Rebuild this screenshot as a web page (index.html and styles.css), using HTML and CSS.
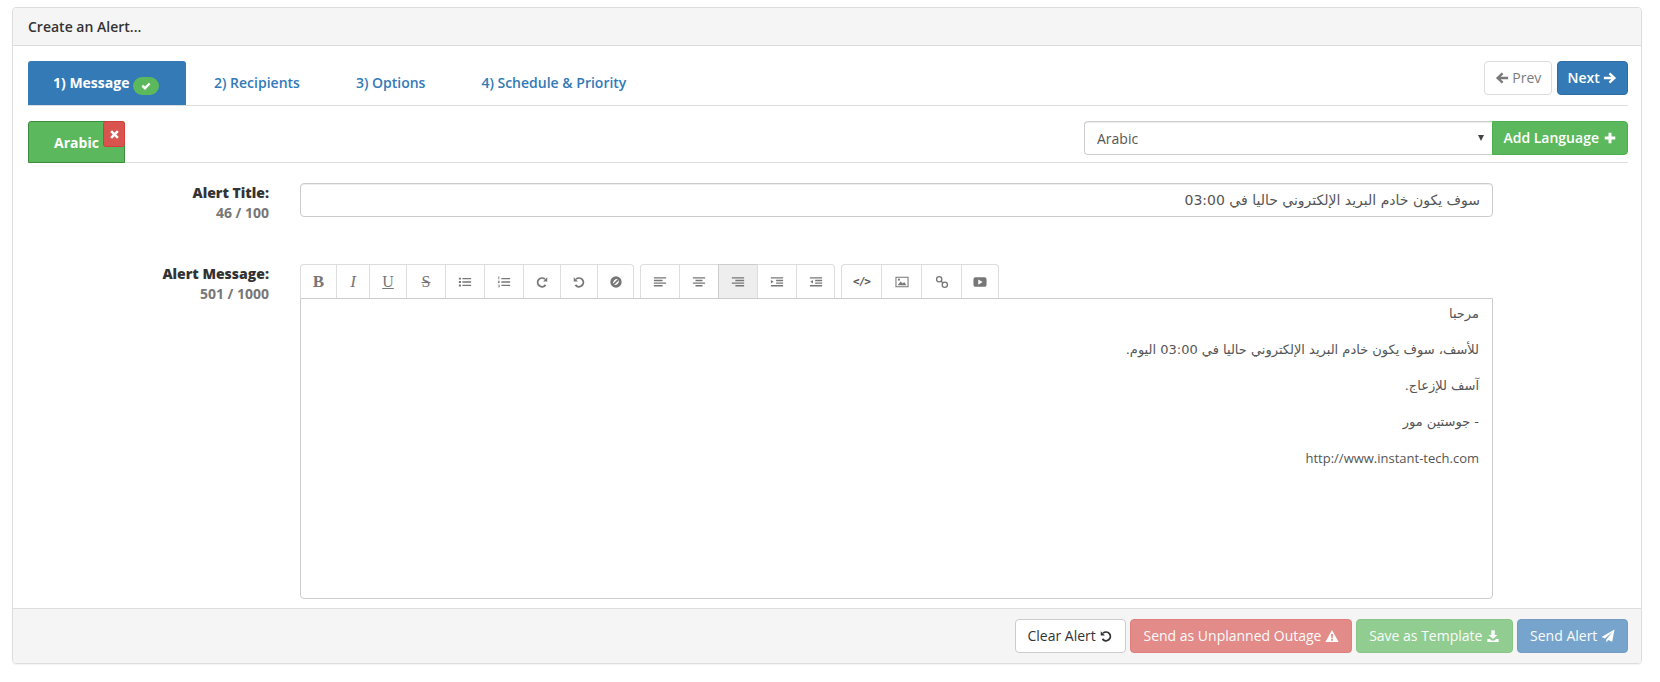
FILE: index.html
```html
<!DOCTYPE html>
<html lang="en">
<head>
<meta charset="utf-8">
<title>Create an Alert</title>
<link rel="stylesheet" href="styles.css">
</head>
<body>
<svg class="defs" width="0" height="0">
  <symbol id="i-ok" viewBox="0 0 16 16"><path d="M2 8.6 4.2 6.4 6.6 8.8 11.8 3.6 14 5.8 6.6 13.2z"/></symbol>
  <symbol id="i-x" viewBox="0 0 16 16"><path d="M4.4 1.8 8 5.4l3.6-3.6 2.6 2.6L10.6 8l3.6 3.6-2.6 2.6L8 10.6l-3.6 3.6-2.6-2.6L5.400 8 1.800 4.400z"/></symbol>
  <symbol id="i-left" viewBox="0 0 16 16"><path d="M7.800 1.800 9.600 3.600 6.400 6.600H15V9.400H6.400L9.600 12.400 7.800 14.200 1 8z"/></symbol>
  <symbol id="i-right" viewBox="0 0 16 16"><path d="M8.200 1.800 6.400 3.600 9.600 6.600H1V9.400H9.600L6.400 12.400 8.200 14.200 15 8z"/></symbol>
  <symbol id="i-plus" viewBox="0 0 16 16"><path d="M6.300 2h3.400v4.300H14v3.400H9.700V14H6.300V9.700H2V6.300h4.300z"/></symbol>
  <symbol id="i-undo" viewBox="0 0 16 16"><path d="M2 2.500 6.800 7.300H2zM4 4a6 6 0 1 1 -.9 8l1.700 -1.300a3.900 3.900 0 1 0 .5 -5.200z"/></symbol>
  <symbol id="i-warn" viewBox="0 0 16 16"><path fill-rule="evenodd" d="M8 1.200 15.600 14.800H.4zM6.900 5.600 7.200 10.500H8.800L9.100 5.600zM7 11.400v1.900h2v-1.900z"/></symbol>
  <symbol id="i-down" viewBox="0 0 16 16"><path d="M6 1.500h4v5.300h3L8 11.500 3 6.800h3zM1.500 11.500h3l1.800 1.500h3.400l1.800-1.500h3v3.300h-13z"/></symbol>
  <symbol id="i-send" viewBox="0 0 16 16"><path d="M15.500 .5 12.800 14.500 8.300 12.500 6 15.300V12L13 3.500 4.500 10.800.5 9z"/></symbol>
  <symbol id="i-ul" viewBox="0 0 16 16"><path d="M1 3h2.400v2.200H1zM5 3.300h10v1.600H5zM1 6.900h2.400v2.200H1zM5 7.200h10v1.600H5zM1 10.800h2.400V13H1zM5 11.100h10v1.600H5z"/></symbol>
  <symbol id="i-ol" viewBox="0 0 16 16"><path d="M5 3.300h10v1.600H5zM5 7.200h10v1.600H5zM5 11.100h10v1.600H5zM1.600 1.800h1v3h-1zM1 6.700h2v.7l-1 1h1v.7H1v-.7l1-1H1zM1 11h2v3H1v-.6h1.300v-.6H1.500v-.5h.8v-.6H1z"/></symbol>
  <symbol id="i-redo" viewBox="0 0 16 16"><path d="M14 2.500V7.300H9.200zM12 4a6 6 0 1 0 .9 8l-1.700-1.300a3.900 3.900 0 1 1-.5-5.200z"/></symbol>
  <symbol id="i-ban" viewBox="0 0 16 16"><path fill-rule="evenodd" d="M8 1.500a6.500 6.500 0 1 1 0 13 6.500 6.500 0 0 1 0-13zM4.700 10.100 10.100 4.700A4.600 4.600 0 0 0 4.700 10.100zM5.900 11.300A4.600 4.600 0 0 0 11.300 5.900z"/></symbol>
  <symbol id="i-al" viewBox="0 0 16 16"><path d="M1 2.500h14v1.500H1zM1 5.500h10v1.500H1zM1 8.500h14V10H1zM1 11.500h10V13H1z"/></symbol>
  <symbol id="i-ac" viewBox="0 0 16 16"><path d="M1 2.500h14v1.500H1zM4 5.500h8v1.500H4zM1 8.500h14V10H1zM4 11.500h8V13H4z"/></symbol>
  <symbol id="i-ar" viewBox="0 0 16 16"><path d="M1 2.500h14v1.500H1zM5 5.500h10v1.500H5zM1 8.500h14V10H1zM5 11.500h10V13H5z"/></symbol>
  <symbol id="i-in" viewBox="0 0 16 16"><path d="M1 2.500h14v1.500H1zM7 5.500h8v1.500H7zM7 8.500h8V10H7zM1 11.500h14V13H1zM1 5.800 4 7.750 1 9.700z"/></symbol>
  <symbol id="i-out" viewBox="0 0 16 16"><path d="M1 2.500h14v1.500H1zM7 5.500h8v1.500H7zM7 8.500h8V10H7zM1 11.500h14V13H1zM4.500 5.800 1.500 7.750 4.500 9.700z"/></symbol>
  <symbol id="i-pic" viewBox="0 0 16 16"><path fill-rule="evenodd" d="M.5 2h15v12H.5zM1.700 3.200v9.600h12.600V3.200z"/><path d="M3 11.800 6.500 7.500l2.200 2.300 1.800-1.800 2.500 3.800z"/><circle cx="4.500" cy="5.300" r="1.200"/></symbol>
  <symbol id="i-link" viewBox="0 0 16 16"><g fill="none" stroke="currentColor" stroke-width="1.500"><circle cx="4.800" cy="4.800" r="3"/><circle cx="11.200" cy="11.200" r="3"/><path d="M6.500 6.500 9.500 9.500"/></g></symbol>
  <symbol id="i-video" viewBox="0 0 16 16"><path fill-rule="evenodd" d="M3 2.500h10A2.500 2.500 0 0 1 15.500 5v6A2.500 2.500 0 0 1 13 13.500H3A2.500 2.500 0 0 1 .5 11V5A2.500 2.500 0 0 1 3 2.500zM6 5v6l5-3z"/></symbol>
</svg>

<section class="panel">
  <header class="panel-heading">Create an Alert...</header>
  <div class="panel-body">
    <div class="wizard">
      <nav class="tabs">
        <a class="tab tab-active">1) Message <span class="badge"><svg class="ic ic-badge"><use href="#i-ok"/></svg></span></a>
        <a class="tab tab-2">2) Recipients</a>
        <a class="tab tab-3">3) Options</a>
        <a class="tab tab-4">4) Schedule &amp; Priority</a>
      </nav>
      <div class="pager">
        <button class="btn btn-default btn-prev"><svg class="ic"><use href="#i-left"/></svg> Prev</button>
        <button class="btn btn-primary btn-next">Next <svg class="ic"><use href="#i-right"/></svg></button>
      </div>
    </div>

    <div class="lang-row">
      <div class="lang-tab">Arabic<span class="lang-remove"><svg class="ic ic-x"><use href="#i-x"/></svg></span></div>
      <div class="lang-add">
        <div class="select-wrap"><select class="select"><option>Arabic</option></select></div>
        <button class="btn btn-success btn-add">Add Language <svg class="ic"><use href="#i-plus"/></svg></button>
      </div>
    </div>

    <div class="field field-title">
      <div class="field-label"><strong>Alert Title:</strong><span>46 / 100</span></div>
      <input class="input" dir="rtl" type="text" value="سوف يكون خادم البريد الإلكتروني حاليا في 03:00">
    </div>

    <div class="field">
      <div class="field-label"><strong>Alert Message:</strong><span>501 / 1000</span></div>
      <div class="editor">
        <div class="toolbar">
          <div class="tool-group">
            <button class="tool w36 serif b">B</button>
            <button class="tool w33 serif i">I</button>
            <button class="tool w37 serif u">U</button>
            <button class="tool w39 serif s">S</button>
            <button class="tool w39"><svg class="ic"><use href="#i-ul"/></svg></button>
            <button class="tool w39"><svg class="ic"><use href="#i-ol"/></svg></button>
            <button class="tool w37"><svg class="ic"><use href="#i-redo"/></svg></button>
            <button class="tool w37"><svg class="ic"><use href="#i-undo"/></svg></button>
            <button class="tool w37"><svg class="ic"><use href="#i-ban"/></svg></button>
          </div>
          <div class="tool-group">
            <button class="tool w39"><svg class="ic"><use href="#i-al"/></svg></button>
            <button class="tool w39"><svg class="ic"><use href="#i-ac"/></svg></button>
            <button class="tool w39 tool-on"><svg class="ic"><use href="#i-ar"/></svg></button>
            <button class="tool w39"><svg class="ic"><use href="#i-in"/></svg></button>
            <button class="tool w39"><svg class="ic"><use href="#i-out"/></svg></button>
          </div>
          <div class="tool-group">
            <button class="tool w40 code">&lt;/&gt;</button>
            <button class="tool w40"><svg class="ic"><use href="#i-pic"/></svg></button>
            <button class="tool w40"><svg class="ic"><use href="#i-link"/></svg></button>
            <button class="tool w38"><svg class="ic"><use href="#i-video"/></svg></button>
          </div>
        </div>
        <div class="editor-body" dir="rtl">
          <p>مرحبا</p>
          <p>للأسف، سوف يكون خادم البريد الإلكتروني حاليا في 03:00 اليوم.</p>
          <p>آسف للإزعاج.</p>
          <p>- جوستين مور</p>
          <p>http://www.instant-tech.com</p>
        </div>
      </div>
    </div>
  </div>
  <footer class="panel-footer">
    <button class="btn btn-default btn-clear">Clear Alert <svg class="ic"><use href="#i-undo"/></svg></button>
    <button class="btn btn-danger faded">Send as Unplanned Outage <svg class="ic"><use href="#i-warn"/></svg></button>
    <button class="btn btn-success faded">Save as Template <svg class="ic"><use href="#i-down"/></svg></button>
    <button class="btn btn-primary faded">Send Alert <svg class="ic"><use href="#i-send"/></svg></button>
  </footer>
</section>
</body>
</html>
```
FILE: styles.css
```css
* { box-sizing: border-box; }
html, body { margin: 0; height: 100%; }
body {
  padding: 7px 18px 0 12px;
  background: #fff;
  color: #333;
  font: 14px/20px "Open Sans", "DejaVu Sans", sans-serif;
}
.defs { position: absolute; }
.ic { width: 14px; height: 14px; fill: currentColor; vertical-align: -2px; }

.panel {
  height: 657px;
  display: flex;
  flex-direction: column;
  border: 1px solid #ddd;
  border-radius: 4px;
  box-shadow: 0 1px 1px rgba(0,0,0,.05);
}
.panel-heading {
  height: 38px;
  padding: 9px 15px;
  background: #f5f5f5;
  border-bottom: 1px solid #ddd;
  font-weight: 600;
  border-radius: 3px 3px 0 0;
}
.panel-body { flex: 1; padding: 15px 13px 0 15px; }

.wizard {
  display: flex;
  justify-content: space-between;
  height: 45px;
  border-bottom: 1px solid #ddd;
  margin-right: 0;
}
.tabs { display: flex; }
.tab {
  height: 44px;
  line-height: 44px;
  color: #337ab7;
  font-weight: 600;
  padding: 0 28px;
  white-space: nowrap;
}
.tab-active {
  width: 158px;
  padding: 0 0 0 25px;
  background: #337ab7;
  color: #fff;
  border-radius: 3px 3px 0 0;
  font-weight: 700;
}
.badge {
  display: inline-flex;
  align-items: center;
  justify-content: center;
  width: 26px;
  height: 18px;
  border-radius: 9px;
  background: #5cb85c;
  vertical-align: -4px;
}
.ic-badge { width: 12px; height: 12px; }
.pager { display: flex; gap: 5px; }

.btn {
  height: 34px;
  padding: 0 12px;
  font: 600 14px/32px "Open Sans", "DejaVu Sans", sans-serif;
  border: 1px solid transparent;
  border-radius: 4px;
  white-space: nowrap;
}
.btn-default { background: #fff; border-color: #ccc; color: #333; font-weight: 400; }
.btn-primary { background: #337ab7; border-color: #2e6da4; color: #fff; }
.btn-success { background: #5cb85c; border-color: #4cae4c; color: #fff; }
.btn-danger { background: #d9534f; border-color: #d43f3a; color: #fff; }
.faded { opacity: .65; }
.btn-prev { width: 68px; opacity: .65; padding: 0; }
.btn-next { width: 71px; padding: 0; }

.lang-row {
  display: flex;
  justify-content: space-between;
  height: 57px;
  padding-top: 15px;
  border-bottom: 1px solid #ddd;
}
.lang-tab {
  position: relative;
  width: 97px;
  height: 42px;
  padding-top: 11px;
  text-align: center;
  padding-right: 0;
  background: #5cb85c;
  border: 1px solid #3d8b3d;
  border-bottom-width: 1px;
  border-radius: 3px 3px 0 0;
  color: #fff;
  font-weight: 700;
}
.lang-remove {
  position: absolute;
  top: -1px;
  right: -1px;
  width: 22px;
  height: 26px;
  display: flex;
  align-items: center;
  justify-content: center;
  background: #d9534f;
  border: 1px solid #d43f3a;
  border-radius: 3px;
}
.ic-x { width: 11px; height: 11px; }
.lang-add { display: flex; }
.select-wrap { position: relative; width: 408px; }
.select-wrap::after {
  content: "";
  position: absolute;
  right: 8px;
  top: 14px;
  border: 3.500px solid transparent;
  border-top: 6px solid #444;
  border-bottom: 0;
}
.select {
  width: 100%;
  height: 34px;
  padding: 0 12px;
  appearance: none;
  background: #fff;
  color: #555;
  border: 1px solid #ccc;
  border-right: 0;
  border-radius: 4px 0 0 4px;
  font: 14px "Open Sans", "DejaVu Sans", sans-serif;
  box-shadow: inset 0 1px 1px rgba(0,0,0,.075);
}
.btn-add { width: 136px; padding: 0; border-radius: 0 4px 4px 0; }

.field { display: flex; margin-right: 135px; }
.field-title { margin-top: 20px; margin-bottom: 41px; }
.field-label {
  flex: none;
  width: 241px;
  margin-right: 31px;
  display: flex;
  flex-direction: column;
  text-align: right;
  font-weight: 700;
}
.field-label strong { display: block; }
.field-label span { color: #777; }
.input {
  flex: 1;
  min-width: 0;
  height: 34px;
  padding: 6px 12px;
  color: #555;
  border: 1px solid #ccc;
  border-radius: 4px;
  font: 14px "DejaVu Sans", "Open Sans", sans-serif;
  box-shadow: inset 0 1px 1px rgba(0,0,0,.075);
}

.editor { flex: 1; min-width: 0; }
.toolbar { display: flex; gap: 6px; height: 34px; }
.tool-group { display: flex; }
.tool {
  height: 34px;
  padding: 0;
  background: #fff;
  color: #777;
  border: 1px solid #ddd;
  border-right-width: 0;
  border-bottom-width: 0;
  display: flex;
  align-items: center;
  justify-content: center;
}
.tool:first-child { border-radius: 4px 0 0 0; }
.tool:last-child { border-right-width: 1px; border-radius: 0 4px 0 0; }
.tool-on { background: #eee; border-color: #ccc; }
.w33 { width: 33px; } .w36 { width: 36px; } .w37 { width: 37px; }
.w38 { width: 38px; } .w39 { width: 39px; } .w40 { width: 40px; }
.serif { font: 16px "Liberation Serif", serif; color: #777; }
.b { font-weight: 700; font-size: 17px; }
.i { font-style: italic; font-size: 17px; }
.u { text-decoration: underline; }
.s { text-decoration: line-through; }
.code { font: 700 11px "DejaVu Sans Mono", monospace; color: #555; letter-spacing: -1px; }
.editor-body {
  height: 301px;
  padding: 5px 13px;
  border: 1px solid #ccc;
  border-radius: 0 0 4px 4px;
  color: #555;
  font-family: "DejaVu Sans", "Open Sans", sans-serif;
  font-size: 13px;
}
.editor-body p { margin: 0 0 16px; }
.editor-body p:last-child { font-family: "Open Sans", sans-serif; }

.panel-footer {
  height: 55px;
  padding: 10px 13px 0 0;
  display: flex;
  justify-content: flex-end;
  gap: 4px;
  background: #f5f5f5;
  border-top: 1px solid #ddd;
  border-radius: 0 0 3px 3px;
}
.panel-footer .btn { font-weight: 400; }
```
